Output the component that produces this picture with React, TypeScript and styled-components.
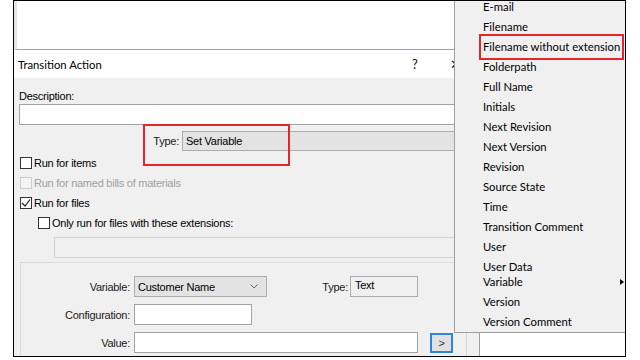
import React from "react";
import styled, { createGlobalStyle } from "styled-components";

const GlobalStyle = createGlobalStyle`
  html, body { margin: 0; padding: 0; background: #fff; }
  body {
    font-family: "Liberation Sans", Arial, sans-serif;
    font-size: 11px;
    letter-spacing: -0.25px;
    color: #000;
  }
`;

const uiFont = `Lato, "Open Sans", sans-serif`;

const Frame = styled.div`
  position: relative;
  margin-left: 13px;
  width: 611px;
  height: 355px;
  border: 1px solid #000;
  overflow: hidden;
  display: flex;
  flex-direction: column;
  background: #fff;
`;

const BackPane = styled.div`
  height: 48px;
  flex: none;
  background: #fff;
  border-left: 3px solid #e4e4e4;
  border-bottom: 1px solid #a0a0a0;
`;

const Stage = styled.div`
  flex: 1;
  display: flex;
  min-height: 0;
`;

const Dialog = styled.div`
  width: 452px;
  flex: none;
  display: flex;
  flex-direction: column;
  background: #f0f0f0;
  border-right: 1px solid #d4d4d4;
`;

const TitleBar = styled.div`
  height: 28px;
  flex: none;
  display: flex;
  align-items: center;
  padding-left: 4px;
  background: #fff;
  font-family: ${uiFont};
  font-size: 11.3px;
  letter-spacing: 0;
`;

const Title = styled.div`
  flex: 1;
`;

const TitleButton = styled.div<{ $w: number; $gap?: number; $shift?: number }>`
  box-sizing: border-box;
  width: ${(p) => p.$w}px;
  margin-right: ${(p) => p.$gap ?? 0}px;
  padding-left: ${(p) => p.$shift ?? 0}px;
  text-align: center;
  font-size: 13px;
  color: #111;
`;

const Body = styled.div`
  flex: 1;
  display: flex;
  flex-direction: column;
  padding: 12px 6px 0 5px;
  min-height: 0;
`;

const Label = styled.div`
  line-height: 13px;
  height: 13px;
`;

const TextBox = styled.div<{ $w?: number; $disabled?: boolean; $indent?: number }>`
  box-sizing: border-box;
  height: 21px;
  flex: none;
  width: ${(p) => (p.$w ? `${p.$w}px` : "auto")};
  margin-left: ${(p) => p.$indent ?? 0}px;
  background: ${(p) => (p.$disabled ? "#f0f0f0" : "#fff")};
  border: 1px solid ${(p) => (p.$disabled ? "#d4d4d4" : "#a3a3a3")};
`;

const DescBox = styled(TextBox)`
  margin-top: 1px;
`;

const ExtBox = styled(TextBox)`
  margin-top: 4px;
`;

const Combo = styled.div<{ $w?: number }>`
  box-sizing: border-box;
  height: ${(p) => (p.$w ? 21 : 20)}px;
  ${(p) => (p.$w ? `width: ${p.$w}px;` : "flex: 1;")}
  display: flex;
  align-items: center;
  padding: 0 8px 0 3px;
  background: #e3e3e3;
  border: 1px solid #adadad;
  white-space: nowrap;
`;

const ComboText = styled.span`
  flex: 1;
`;

const TypeRow = styled.div`
  position: relative;
  margin: 6px 0 2px;
  height: 20px;
  display: flex;
  align-items: center;
`;

const TypeLabel = styled.div`
  width: 160px;
  text-align: right;
  margin-right: 3px;
  color: #1a1a1a;
`;

const Callout = styled.div<{ $l: number; $t: number; $w: number; $h: number }>`
  position: absolute;
  left: ${(p) => p.$l}px;
  top: ${(p) => p.$t}px;
  width: ${(p) => p.$w}px;
  height: ${(p) => p.$h}px;
  box-sizing: border-box;
  border: 2px solid #e3262b;
  pointer-events: none;
`;

const CheckRow = styled.div<{ $indent?: number; $disabled?: boolean }>`
  height: 20px;
  display: flex;
  align-items: center;
  padding-left: ${(p) => p.$indent ?? 1}px;
  color: ${(p) => (p.$disabled ? "#a0a0a0" : "#000")};
`;

const Box = styled.span<{ $disabled?: boolean }>`
  box-sizing: border-box;
  width: 12px;
  height: 12px;
  margin-right: 2px;
  display: inline-flex;
  align-items: center;
  justify-content: center;
  background: ${(p) => (p.$disabled ? "#f4f4f4" : "#fff")};
  border: 1px solid ${(p) => (p.$disabled ? "#cccccc" : "#333")};
`;

const Panel = styled.div`
  flex: 1;
  margin: 4px 0 0 1px;
  padding-top: 13px;
  border-top: 1px solid #dcdcdc;
  border-left: 1px solid #dcdcdc;
  display: flex;
  flex-direction: column;
  gap: 7px;
`;

const FieldRow = styled.div`
  display: flex;
  align-items: center;
  height: 21px;
`;

const FieldLabel = styled.div<{ $w: number }>`
  width: ${(p) => p.$w}px;
  text-align: right;
  margin-right: ${(p) => (p.$w > 100 ? 4 : 2)}px;
  color: #1a1a1a;
`;

const ReadOnly = styled.div`
  box-sizing: border-box;
  width: 68px;
  height: 21px;
  padding: 2px 0 0 4px;
  border: 1px solid #adadad;
  background: #f0f0f0;
`;

const MoreButton = styled.div`
  box-sizing: border-box;
  width: 23px;
  height: 20px;
  margin-left: 12px;
  display: flex;
  align-items: center;
  justify-content: center;
  background: #e1e1e1;
  border: 2px solid #2b86d9;
  color: #333;
`;

const SidePane = styled.div`
  flex: 1;
  display: flex;
  background: #f0f0f0;
`;

const SideList = styled.div`
  flex: 1;
  margin-left: 12px;
  background: #fff;
  border-left: 1px solid #a0a0a0;
`;

const Menu = styled.ul`
  position: absolute;
  left: 440px;
  top: -4px;
  width: 180px;
  margin: 0;
  padding: 0;
  list-style: none;
  background: #f0f0f0;
  border-left: 1px solid #a0a0a0;
  border-bottom: 1px solid #a0a0a0;
  font-family: ${uiFont};
  font-size: 11.3px;
  letter-spacing: 0;
`;

const MenuItem = styled.li<{ $short?: boolean; $marked?: boolean; $sub?: boolean }>`
  position: relative;
  height: ${(p) => (p.$short ? 15 : 20)}px;
  line-height: 20px;
  padding-left: 28px;
  white-space: nowrap;
  color: #000;
  &::after {
    content: "";
    display: ${(p) => (p.$marked ? "block" : "none")};
    position: absolute;
    left: 24px;
    top: -3px;
    width: 145px;
    height: 26px;
    box-sizing: border-box;
    border: 2px solid #e3262b;
  }
  &::before {
    content: "";
    display: ${(p) => (p.$sub ? "block" : "none")};
    position: absolute;
    left: 165px;
    top: 7px;
    border-left: 4px solid #000;
    border-top: 3px solid transparent;
    border-bottom: 3px solid transparent;
  }
`;

const menuItems: { label: string; short?: boolean; marked?: boolean; sub?: boolean }[] = [
  { label: "E-mail" },
  { label: "Filename" },
  { label: "Filename without extension", marked: true },
  { label: "Folderpath" },
  { label: "Full Name" },
  { label: "Initials" },
  { label: "Next Revision" },
  { label: "Next Version" },
  { label: "Revision" },
  { label: "Source State" },
  { label: "Time" },
  { label: "Transition Comment" },
  { label: "User" },
  { label: "User Data", short: true },
  { label: "Variable", sub: true },
  { label: "Version" },
  { label: "Version Comment" },
];

function Check({ checked, disabled }: { checked?: boolean; disabled?: boolean }) {
  return (
    <Box $disabled={disabled}>
      {checked && (
        <svg width="10" height="10" viewBox="0 0 10 10">
          <path d="M1 5 L4 8 L9 1.5" fill="none" stroke="#222" strokeWidth="1.2" />
        </svg>
      )}
    </Box>
  );
}

function Chevron() {
  return (
    <svg width="8" height="5" viewBox="0 0 8 5">
      <path d="M0.5 0.5 L4 4 L7.5 0.5" fill="none" stroke="#666" strokeWidth="1" />
    </svg>
  );
}

export default function App() {
  return (
    <>
      <GlobalStyle />
      <Frame>
        <BackPane />
        <Stage>
          <Dialog>
            <TitleBar>
              <Title>Transition Action</Title>
              <TitleButton $w={28} $gap={7}>?</TitleButton>
              <TitleButton $w={30} $shift={8}>✕</TitleButton>
            </TitleBar>
            <Body>
              <Label>Description:</Label>
              <DescBox />
              <TypeRow>
                <TypeLabel>Type:</TypeLabel>
                <Combo>
                  <ComboText>Set Variable</ComboText>
                </Combo>
                <Callout $l={124} $t={-7} $w={147} $h={42} />
              </TypeRow>
              <CheckRow>
                <Check />
                Run for items
              </CheckRow>
              <CheckRow $disabled>
                <Check disabled />
                Run for named bills of materials
              </CheckRow>
              <CheckRow>
                <Check checked />
                Run for files
              </CheckRow>
              <CheckRow $indent={19}>
                <Check />
                Only run for files with these extensions:
              </CheckRow>
              <ExtBox $disabled $indent={35} />
              <Panel>
                <FieldRow>
                  <FieldLabel $w={109}>Variable:</FieldLabel>
                  <Combo $w={133}>
                    <ComboText>Customer Name</ComboText>
                    <Chevron />
                  </Combo>
                  <FieldLabel $w={81}>Type:</FieldLabel>
                  <ReadOnly>Text</ReadOnly>
                </FieldRow>
                <FieldRow>
                  <FieldLabel $w={109}>Configuration:</FieldLabel>
                  <TextBox $w={118} />
                </FieldRow>
                <FieldRow>
                  <FieldLabel $w={109}>Value:</FieldLabel>
                  <TextBox $w={284} />
                  <MoreButton>&gt;</MoreButton>
                </FieldRow>
              </Panel>
            </Body>
          </Dialog>
          <SidePane>
            <SideList />
          </SidePane>
        </Stage>
        <Menu>
          {menuItems.map((m) => (
            <MenuItem key={m.label} $short={m.short} $marked={m.marked} $sub={m.sub}>
              {m.label}
            </MenuItem>
          ))}
        </Menu>
      </Frame>
    </>
  );
}
